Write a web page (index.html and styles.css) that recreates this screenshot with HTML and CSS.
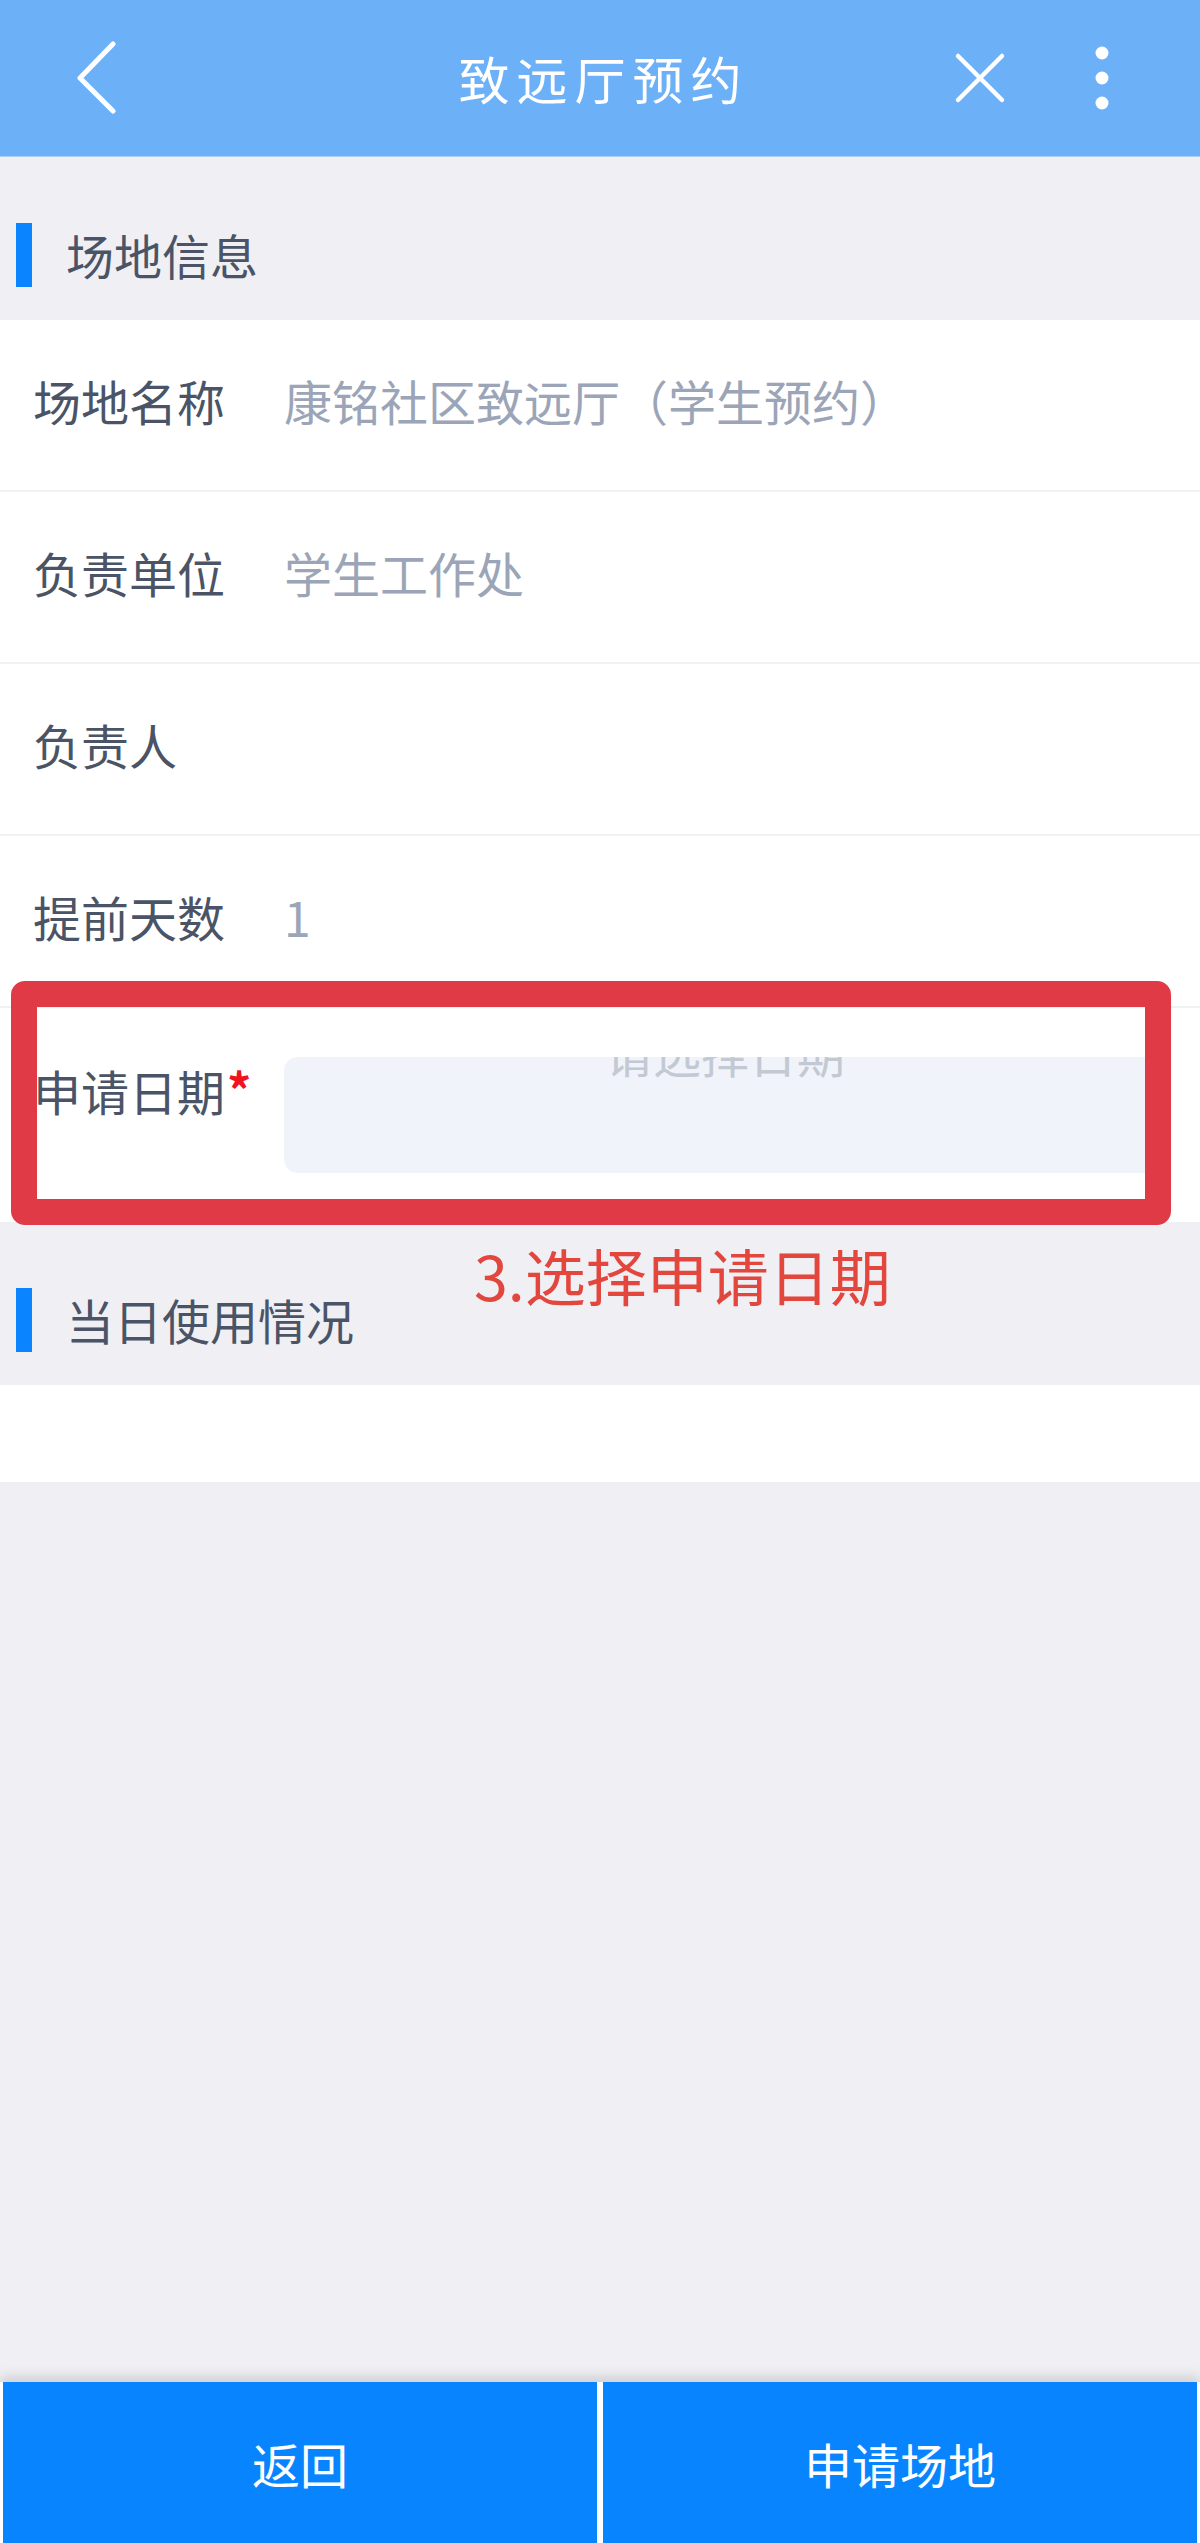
FILE: index.html
```html
<!DOCTYPE html>
<html lang="zh-CN">
<head>
<meta charset="utf-8">
<title>致远厅预约</title>
<link rel="stylesheet" href="styles.css">
</head>
<body>
<div class="page">
  <header class="topbar">
    <div class="topbar-left">
      <svg class="icon-back" width="40" height="74" viewBox="0 0 40 74"><path d="M37 3 L4 37 L37 70" fill="none" stroke="#fff" stroke-width="5" stroke-linecap="round" stroke-linejoin="round"/></svg>
    </div>
    <div class="topbar-title">致远厅预约</div>
    <div class="topbar-right">
      <svg class="icon-close" width="52" height="52" viewBox="0 0 52 52"><path d="M4 4 L48 48 M48 4 L4 48" fill="none" stroke="#fff" stroke-width="4.5" stroke-linecap="round"/></svg>
      <svg class="icon-more" width="20" height="66" viewBox="0 0 20 66"><circle cx="10" cy="8" r="6.5" fill="#fff"/><circle cx="10" cy="33" r="6.5" fill="#fff"/><circle cx="10" cy="58" r="6.5" fill="#fff"/></svg>
    </div>
  </header>

  <main class="content">
    <div class="section-head"><span class="bar"></span><span class="section-title">场地信息</span></div>
    <div class="form">
      <div class="row"><span class="label">场地名称</span><span class="value">康铭社区致远厅（学生预约）</span></div>
      <div class="row"><span class="label">负责单位</span><span class="value">学生工作处</span></div>
      <div class="row"><span class="label">负责人</span><span class="value"></span></div>
      <div class="row"><span class="label">提前天数</span><span class="value">1</span></div>
      <div class="row row-date">
        <span class="label label-top">申请日期<span class="req">*</span></span>
        <div class="date-input"><div class="placeholder">请选择日期</div></div>
      </div>
    </div>
    <div class="section-head"><span class="bar"></span><span class="section-title">当日使用情况</span></div>
    <div class="usage"></div>
  </main>

  <footer class="actions">
    <button class="btn">返回</button>
    <button class="btn">申请场地</button>
  </footer>

  <div class="mark-box"></div>
  <div class="mark-text">3.选择申请日期</div>
</div>
</body>
</html>
```

FILE: styles.css
```css
* { box-sizing: border-box; }
html, body { margin: 0; padding: 0; }
body {
  font-family: "Noto Sans CJK SC", "Noto Sans", sans-serif;
  background: #efeff4;
}
.page {
  position: relative;
  min-height: 100vh;
  display: flex;
  flex-direction: column;
}
.topbar {
  height: 157px;
  background: #6cb0f8;
  display: grid;
  grid-template-columns: 1fr auto 1fr;
  align-items: center;
  border-bottom: 1px solid #a9cff5;
}
.topbar-left { padding-left: 76px; display: flex; align-items: center; }
.topbar-title {
  color: #fff;
  font-size: 51px;
  font-weight: 400;
  letter-spacing: 7px;
  line-height: 60px;
  padding-left: 7px;
}
.topbar-right {
  display: flex;
  justify-content: flex-end;
  align-items: center;
  padding-right: 88px;
  gap: 86px;
}
.icon-back, .icon-close, .icon-more { display: block; }

.content { flex: 1; }
.section-head {
  height: 163px;
  padding-top: 66px;
  display: flex;
  align-items: flex-start;
}
.bar {
  width: 16px;
  height: 64px;
  margin-left: 16px;
  background: #0a84ff;
}
.section-title {
  margin-left: 34px;
  font-size: 48px;
  line-height: 62px;
  color: #4a5466;
}
.form { background: #fff; }
.row {
  min-height: 172px;
  border-bottom: 2px solid #eff1f5;
  display: flex;
  align-items: center;
  padding: 0 34px 10px 33px;
}
.label {
  width: 251px;
  flex-shrink: 0;
  font-size: 48px;
  color: #4a5466;
  line-height: 64px;
}
.value {
  font-size: 48px;
  color: #9ba5b7;
  line-height: 64px;
}
.row-date {
  min-height: 214px;
  border-bottom: none;
  align-items: flex-start;
  padding-top: 49px;
  padding-bottom: 49px;
}
.label-top { line-height: 66px; }
.req {
  color: #f0141e;
  font-weight: 700;
  font-size: 48px;
  vertical-align: top;
  line-height: 62px;
  margin-left: 2px;
}
.date-input {
  flex: 1;
  height: 116px;
  background: #f0f3f9;
  border-radius: 14px;
  overflow: hidden;
}
.placeholder {
  margin-top: -29px;
  line-height: 48px;
  font-size: 48px;
  color: #c3c9d3;
  text-align: center;
}
.usage { height: 97px; background: #fff; }

.actions {
  height: 161px;
  background: #fff;
  display: flex;
  gap: 6px;
  padding: 0 3px;
  box-shadow: 0 -5px 12px rgba(0, 0, 0, 0.14);
}
.btn {
  flex: 1;
  border: none;
  background: #0885fe;
  color: #fff;
  font-family: "Noto Sans CJK SC", "Noto Sans", sans-serif;
  font-size: 48px;
  padding: 0;
}

.mark-box {
  position: absolute;
  left: 11px;
  top: 981px;
  width: 1160px;
  height: 244px;
  border: 26px solid #e03a47;
  border-radius: 14px;
}
.mark-text {
  position: absolute;
  left: 474px;
  top: 1243px;
  font-size: 61px;
  line-height: 64px;
  color: #e2463d;
}
```
